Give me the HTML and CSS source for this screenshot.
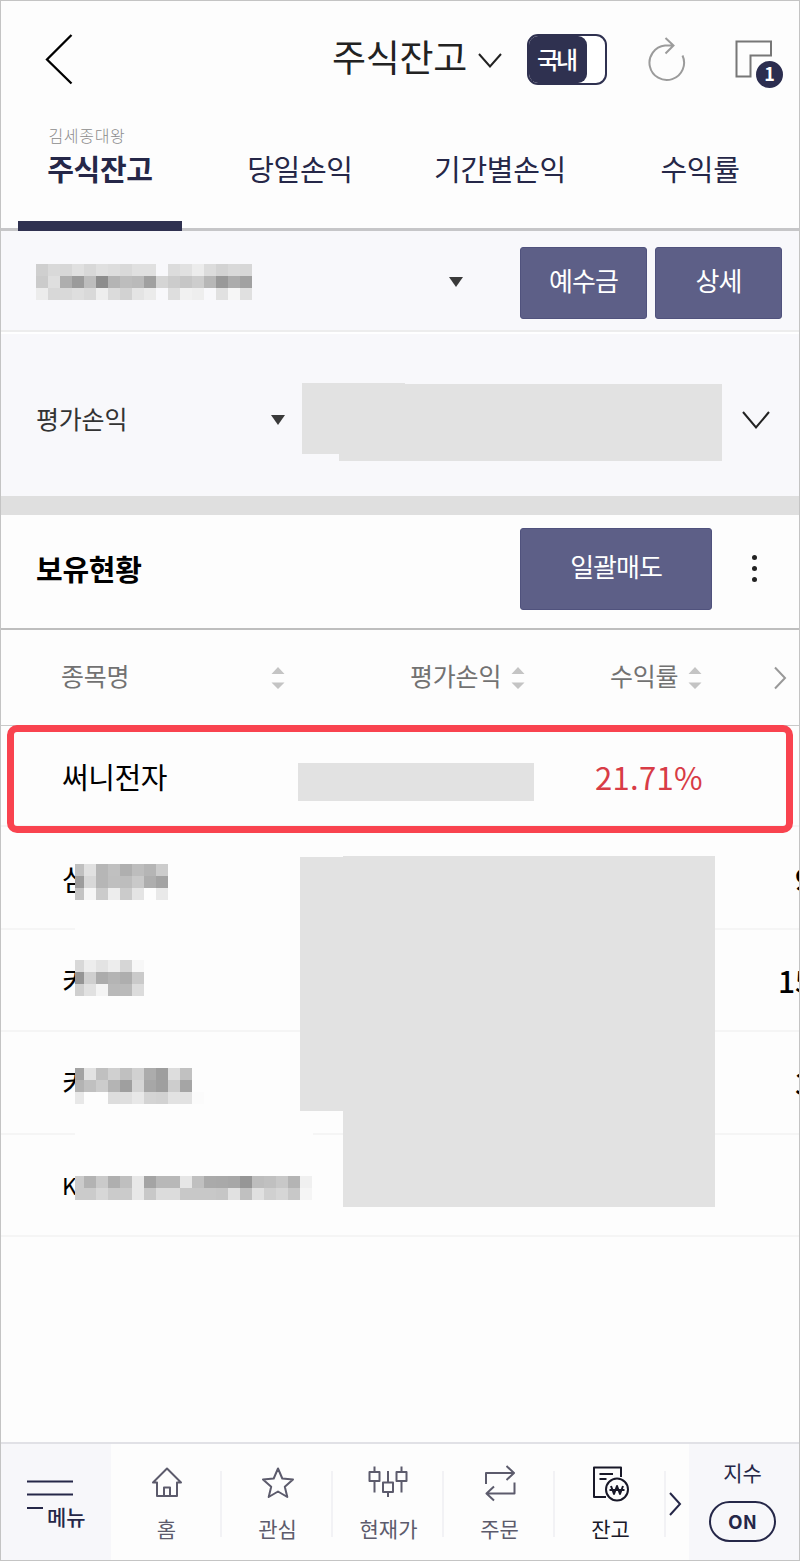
FILE: index.html
```html
<!DOCTYPE html>
<html lang="ko">
<head>
    <meta charset="UTF-8">
    <meta name="viewport" content="width=device-width, initial-scale=1.0">
    <title>주식잔고</title>
    <link rel="stylesheet" href="styles.css">
</head>
<body>
    <div class="app">
        <header class="header">
            <svg class="back" width="30" height="52" viewBox="0 0 30 52"><path d="M27.5 2 3 26.5 27.5 50.500"/></svg>
            <h1>주식잔고</h1>
            <svg class="title-arrow" width="26" height="18" viewBox="0 0 26 18"><path d="M2 2 13 14.500 24 2"/></svg>
            <div class="market"><span>국내</span></div>
            <svg class="refresh" width="40" height="46" viewBox="0 0 40 46">
                <path d="M35.500 19.500A17.300 17.300 0 1 1 18 9.500H26M18.500 2 26.500 9.500 18.500 17.500"/>
            </svg>
            <div class="window">
                <svg width="38" height="38" viewBox="0 0 38 38"><path d="M1.500 1.500H36V15.500H15.500V36.500H1.500Z"/></svg>
                <span class="badge">1</span>
            </div>
        </header>

        <nav class="tabs">
            <a class="tab active"><small>김세종대왕</small>주식잔고</a>
            <a class="tab">당일손익</a>
            <a class="tab">기간별손익</a>
            <a class="tab">수익률</a>
        </nav>

        <section class="account">
            <div class="mosaic" data-cells="cfd9d7e0d8e0ddd9e0e0--dce1ecdcd3d9d7 cbdfae9bbd8db4bdbaa0d5ccc6cdb799aca1 ecd8d9ded9eedbd2e4eb--def1ee--e1f6e0"></div>
            <i class="caret"></i>
            <button>예수금</button>
            <button>상세</button>
        </section>

        <section class="profit">
            <span class="label">평가손익</span>
            <i class="caret"></i>
            <div class="masked-amount"></div>
            <svg width="32" height="22" viewBox="0 0 32 22"><path d="M3 3 16 18.500 29 3"/></svg>
        </section>

        <section class="holdings-title">
            <h2>보유현황</h2>
            <button>일괄매도</button>
            <div class="more"><i></i><i></i><i></i></div>
        </section>

        <div class="table-head">
            <span class="col-name">종목명</span>
            <svg class="sort" width="14" height="24" viewBox="0 0 14 24"><path d="M7 1 13.500 8H.5ZM7 23 .5 16.500H13.500Z"/></svg>
            <span class="col-profit">평가손익</span>
            <svg class="sort" width="14" height="24" viewBox="0 0 14 24"><path d="M7 1 13.500 8H.5ZM7 23 .5 16.500H13.500Z"/></svg>
            <span class="col-rate">수익률</span>
            <svg class="sort" width="14" height="24" viewBox="0 0 14 24"><path d="M7 1 13.500 8H.5ZM7 23 .5 16.500H13.500Z"/></svg>
            <svg class="next" width="14" height="24" viewBox="0 0 14 24"><path d="M2 1.500 12 12 2 22.500"/></svg>
        </div>

        <div class="table-body">
            <div class="row selected">
                <span class="name">써니전자</span>
                <div class="masked-value"></div>
                <span class="rate">21.71%</span>
            </div>
            <div class="row">
                <span class="name cut">삼</span>
                <div class="mosaic narrow low" data-cells="c0e1b6c0afbdb5cc 9cd8b6bfbdc9aea3 c3f6cbedcbe4--e9"></div>
                <span class="edge">9</span>
            </div>
            <div class="row">
                <span class="name cut">카</span>
                <div class="mosaic narrow high" data-cells="d8ede3edd6f7 95cfacb4aeca cfe1f4b9badc"></div>
                <span class="edge wide">15</span>
            </div>
            <div class="row">
                <span class="name cut">카</span>
                <div class="mosaic narrow" data-cells="a3e2c0d0c0d1ac9eddc1-- b3c0ccb49fd5a79fcda5-- e8----dddfe8d4d2e2e2fb"></div>
                <span class="edge">3</span>
            </div>
            <div class="row">
                <span class="name cut latin">K</span>
                <div class="mosaic narrow" data-cells="cbb3caafbfe8a4b8b8e6c0aaa9a796bdc0c8b4f0 cbcbd7cbcbe8c8dcdcc8c8c8c6e1c0e0d0d6c8f5"></div>
            </div>
            <div class="line-cover"></div>
            <div class="line-cover last"></div>
            <div class="masked-block"></div>
            <div class="highlight"></div>
        </div>

        <footer class="bottom">
            <div class="menu">
                <svg width="46" height="30" viewBox="0 0 46 30"><path d="M0 1.500H46M0 14.500H46M0 28H16"/></svg>
                <span>메뉴</span>
            </div>
            <div class="item">
                <svg width="42" height="38" viewBox="0 0 42 38"><path d="M21 4.500 7 18.500H11V32H31V18.500H35ZM18 32V23.500H24V32" /></svg>
                <span>홈</span>
            </div>
            <div class="item">
                <svg width="42" height="38" viewBox="0 0 42 38"><path d="M21 4.500 25.300 14.500 36 15.500 27.800 22.800 30.300 33 21 27.500 11.700 33 14.200 22.800 6 15.500 16.700 14.500Z"/></svg>
                <span>관심</span>
            </div>
            <div class="item">
                <svg width="42" height="38" viewBox="0 0 42 38"><path d="M6.500 2.500V8M6.500 17V28.500M1.500 8H11.500V17H1.500ZM20 7V18.500M20 28V33M15 18.500H25V28H15ZM33.500 2.500V8M33.500 17V28.500M28.500 8H38.500V17H28.500Z"/></svg>
                <span>현재가</span>
            </div>
            <div class="item">
                <svg width="42" height="38" viewBox="0 0 42 38"><path d="M7 20V9H35M27.500 2 35 9 27.500 16M35.500 18.500V29.500H8M15 22.500 7.500 29.500 15 36.500"/></svg>
                <span>주문</span>
            </div>
            <div class="item current">
                <svg width="42" height="38" viewBox="0 0 42 38">
                    <path d="M16 33H4V3.500H31V13M9.500 10H23M9.500 15H16.500"/>
                    <circle cx="27" cy="25.500" r="11"/>
                    <path d="M21 22 24 30 27 22 30 30 33 22M19.500 26H34.500"/>
                </svg>
                <span>잔고</span>
            </div>
            <div class="more-items">
                <svg width="14" height="26" viewBox="0 0 14 26"><path d="M2 2 12 13 2 24"/></svg>
            </div>
            <div class="index">
                <span>지수</span>
                <b>ON</b>
            </div>
        </footer>
    </div>

    <script>
        // data-cells: 공백으로 줄 구분, 두 글자씩 회색 값 (-- 는 빈 칸)
        document.querySelectorAll('.mosaic').forEach(mosaic => {
            mosaic.dataset.cells.split(' ').forEach(line => {
                const row = document.createElement('div');
                line.match(/../g).forEach(gray => {
                    const cell = document.createElement('i');
                    if (gray !== '--') {
                        cell.style.backgroundColor = `#${gray}${gray}${gray}`;
                    }
                    row.appendChild(cell);
                });
                mosaic.appendChild(row);
            });
        });
    </script>
</body>
</html>
```
FILE: styles.css
```css
* {
    box-sizing: border-box;
}
body {
    margin: 0;
    font-family: "Noto Sans CJK KR", sans-serif;
    color: #222;
}
.app {
    width: 800px;
    height: 1561px;
    border: 1px solid #c4c4c4;
    background-color: #fdfdfd;
    display: flex;
    flex-direction: column;
    overflow: hidden;
}
svg {
    display: block;
    flex-shrink: 0;
    fill: none;
    stroke: #222;
    stroke-width: 2;
}
h1, h2 {
    margin: 0;
}
button {
    font-family: inherit;
    font-size: 26px;
    letter-spacing: -1px;
    color: #fff;
    background-color: #5d5f87;
    border: 1px solid #50527d;
    border-radius: 3px;
    padding: 0 0 7px;
    flex-shrink: 0;
}

/* 상단 */
.header {
    height: 116px;
    display: flex;
    align-items: center;
    flex-shrink: 0;
}
.back {
    margin-left: 43px;
    stroke: #000;
    stroke-width: 2.3;
}
h1 {
    width: 137px;
    margin-left: 258px;
    font-size: 37px;
    font-weight: 400;
    line-height: 50px;
    letter-spacing: -0.3px;
    white-space: nowrap;
    margin-top: -6px;
}
.title-arrow {
    margin-left: 8px;
    margin-top: 3px;
}
.market {
    width: 80px;
    height: 51px;
    margin-left: 24px;
    border: 2px solid #2f3150;
    border-radius: 11px;
    background-color: #fff;
    overflow: hidden;
}
.market span {
    display: block;
    width: 58px;
    height: 47px;
    padding-left: 8px;
    border-radius: 0 9px 9px 0;
    background-color: #2f3150;
    color: #fff;
    font-size: 24px;
    font-weight: 500;
    line-height: 46px;
    letter-spacing: -3px;
}
.refresh {
    margin-left: 40px;
    stroke: #9b9b9b;
}
.window {
    position: relative;
    margin-left: 48px;
}
.window svg {
    stroke: #777;
}
.badge {
    position: absolute;
    left: 21px;
    top: 21px;
    width: 27px;
    height: 27px;
    border-radius: 50%;
    background-color: #2b2d4f;
    color: #fff;
    font-size: 18px;
    font-weight: 700;
    line-height: 25px;
    text-align: center;
}

/* 탭 */
.tabs {
    height: 114px;
    display: flex;
    flex-shrink: 0;
    padding-left: 17px;
    border-bottom: 3px solid #c6c6c8;
}
.tab {
    width: 200px;
    height: 114px;
    padding: 31px 36px 0 0;
    flex-shrink: 0;
    font-size: 29px;
    line-height: 40px;
    letter-spacing: -0.3px;
    text-align: center;
    white-space: nowrap;
    color: #252748;
}
.active {
    width: 164px;
    margin-right: 36px;
    padding: 9px 0 0;
    border-bottom: 10px solid #2f3150;
    font-weight: 700;
}
.tab small {
    display: block;
    height: 22px;
    padding-right: 26px;
    font-size: 16px;
    font-weight: 300;
    line-height: 19px;
    letter-spacing: 0.7px;
    color: #8c8c8c;
}

/* 계좌 */
.account, .profit {
    display: flex;
    align-items: center;
    flex-shrink: 0;
    background-color: #f8f8fb;
}
.account {
    height: 101px;
    padding: 3px 0 0 35px;
    border-bottom: 2px solid #ededed;
}
.account .caret {
    margin: 0 58px 0 197px;
}
.account button {
    width: 127px;
    height: 72px;
    margin: 1px 8px 0 -1px;
}
.account button:last-child {
    margin-left: 0;
}
.caret {
    border: 7px solid transparent;
    border-top: 10px solid #3a3a3a;
    border-bottom: 0;
}
.profit {
    height: 164px;
    padding: 10px 0 0 35px;
    border-top: 2px solid #fff;
}
.label {
    width: 235px;
    font-size: 25px;
    letter-spacing: -0.2px;
    margin-top: -4px;
    color: #333;
}
.masked-amount {
    width: 420px;
    height: 78px;
    margin: 4px 18px 0 17px;
    background-color: #e2e2e2;
    clip-path: polygon(0 0, 103px 0, 103px 1px, 100% 1px, 100% 100%, 37px 100%, 37px 71px, 0 71px);
}
.mosaic {
    flex-shrink: 0;
}
.mosaic div {
    display: flex;
}
.mosaic i {
    width: 12px;
    height: 12px;
}
.narrow i:first-child {
    width: 9px;
}

/* 보유현황 */
.holdings-title {
    height: 134px;
    display: flex;
    align-items: center;
    flex-shrink: 0;
    padding-left: 35px;
    border-top: 19px solid #dfdfdf;
    border-bottom: 2px solid #bebebe;
}
h2 {
    width: 484px;
    margin-top: -8px;
    font-size: 29px;
    font-weight: 700;
    letter-spacing: -0.3px;
    color: #000;
}
.holdings-title button {
    width: 192px;
    height: 82px;
    margin-top: -5px;
}
.more {
    display: flex;
    flex-direction: column;
    gap: 6px;
    margin: -6px 0 0 40px;
}
.more i {
    width: 5px;
    height: 5px;
    border-radius: 50%;
    background-color: #222;
}

/* 종목 목록 */
.table-head {
    height: 96px;
    display: flex;
    align-items: center;
    flex-shrink: 0;
    padding-left: 60px;
    border-bottom: 1px solid #c9c9c9;
    font-size: 25px;
    letter-spacing: -0.2px;
    color: #727272;
}
.table-head span {
    white-space: nowrap;
    margin-top: -6px;
}
.sort {
    fill: #c4c4c4;
    stroke: none;
}
.col-name {
    width: 210px;
}
.col-profit {
    width: 101px;
    margin-left: 125px;
}
.col-rate {
    width: 78px;
    margin-left: 85px;
}
.next {
    margin-left: 71px;
    stroke: #999;
}
.table-body {
    position: relative;
    height: 716px;
    flex-shrink: 0;
}
.row {
    height: 102.4px;
    display: flex;
    align-items: center;
    padding-left: 61px;
    border-bottom: 2px solid #f5f5f5;
}
.selected {
    height: 101.4px;
}
.name {
    font-size: 29px;
    line-height: 40px;
    letter-spacing: -0.4px;
    color: #000;
    flex-shrink: 0;
}
.selected .name {
    width: 236px;
}
.cut {
    width: 13px;
    overflow: hidden;
}
.latin {
    font-size: 23px;
}
.row .mosaic {
    margin-top: 7px;
}
.row .low {
    margin-top: 9px;
}
.row .high {
    margin-top: -3px;
}
.masked-value {
    width: 236px;
    height: 38px;
    margin-top: 12px;
    background-color: #e2e2e2;
}
.rate {
    margin: 1px 0 0 61px;
    font-size: 31px;
    letter-spacing: 0.3px;
    color: #d83c46;
}
.edge {
    width: 4px;
    margin-left: auto;
    overflow: hidden;
    font-size: 30px;
    font-weight: 500;
    line-height: 40px;
    color: #000;
}
.edge.wide {
    width: 21px;
}
.line-cover {
    position: absolute;
    left: 74px;
    top: 201px;
    width: 226px;
    height: 112px;
    border: solid #fdfdfd;
    border-width: 5px 0;
}
.line-cover.last {
    top: 405px;
    width: 238px;
    height: 5px;
}
.masked-block {
    position: absolute;
    left: 299px;
    top: 130px;
    width: 415px;
    height: 351px;
    background-color: #e2e2e2;
    clip-path: polygon(0 1px, 43px 1px, 43px 0, 100% 0, 100% 100%, 43px 100%, 43px 255px, 0 255px);
}
.highlight {
    position: absolute;
    left: 6px;
    top: -1px;
    width: 786px;
    height: 108px;
    border: 7px solid #f9434f;
    border-radius: 10px;
}

/* 하단 메뉴 */
.bottom {
    height: 118px;
    display: flex;
    flex-shrink: 0;
    border-top: 2px solid #e1e1e6;
}
.menu, .index {
    width: 110px;
    background-color: #f7f7fa;
    color: #252748;
}
.menu {
    padding: 36px 0 0 26px;
}
.menu svg {
    stroke: #252748;
}
.menu span {
    display: block;
    margin: -8px 0 0 20px;
    font-size: 21px;
    font-weight: 500;
    line-height: 28px;
}
.item {
    width: 111px;
    padding-top: 20px;
    display: flex;
    flex-direction: column;
    align-items: center;
    font-size: 21px;
    line-height: 30px;
    color: #5c5b6c;
    background: linear-gradient(#f2f2f5, #f2f2f5) no-repeat right 27px / 2px 66px;
}
.item svg {
    stroke: #5c5b6c;
    stroke-linejoin: round;
}
.item span {
    margin-top: 11px;
}
.current {
    color: #181828;
}
.current svg {
    stroke: #181828;
}
.more-items {
    width: 23px;
    padding: 47px 0 0 2px;
}
.more-items svg {
    stroke: #252748;
}
.index {
    display: flex;
    flex-direction: column;
    align-items: center;
    padding: 13px 3px 0 0;
    font-size: 21px;
    line-height: 30px;
}
.index b {
    width: 67px;
    height: 41px;
    margin-top: 14px;
    border: 2px solid #252748;
    border-radius: 21px;
    font-size: 19px;
    line-height: 36px;
    text-align: center;
}
```
